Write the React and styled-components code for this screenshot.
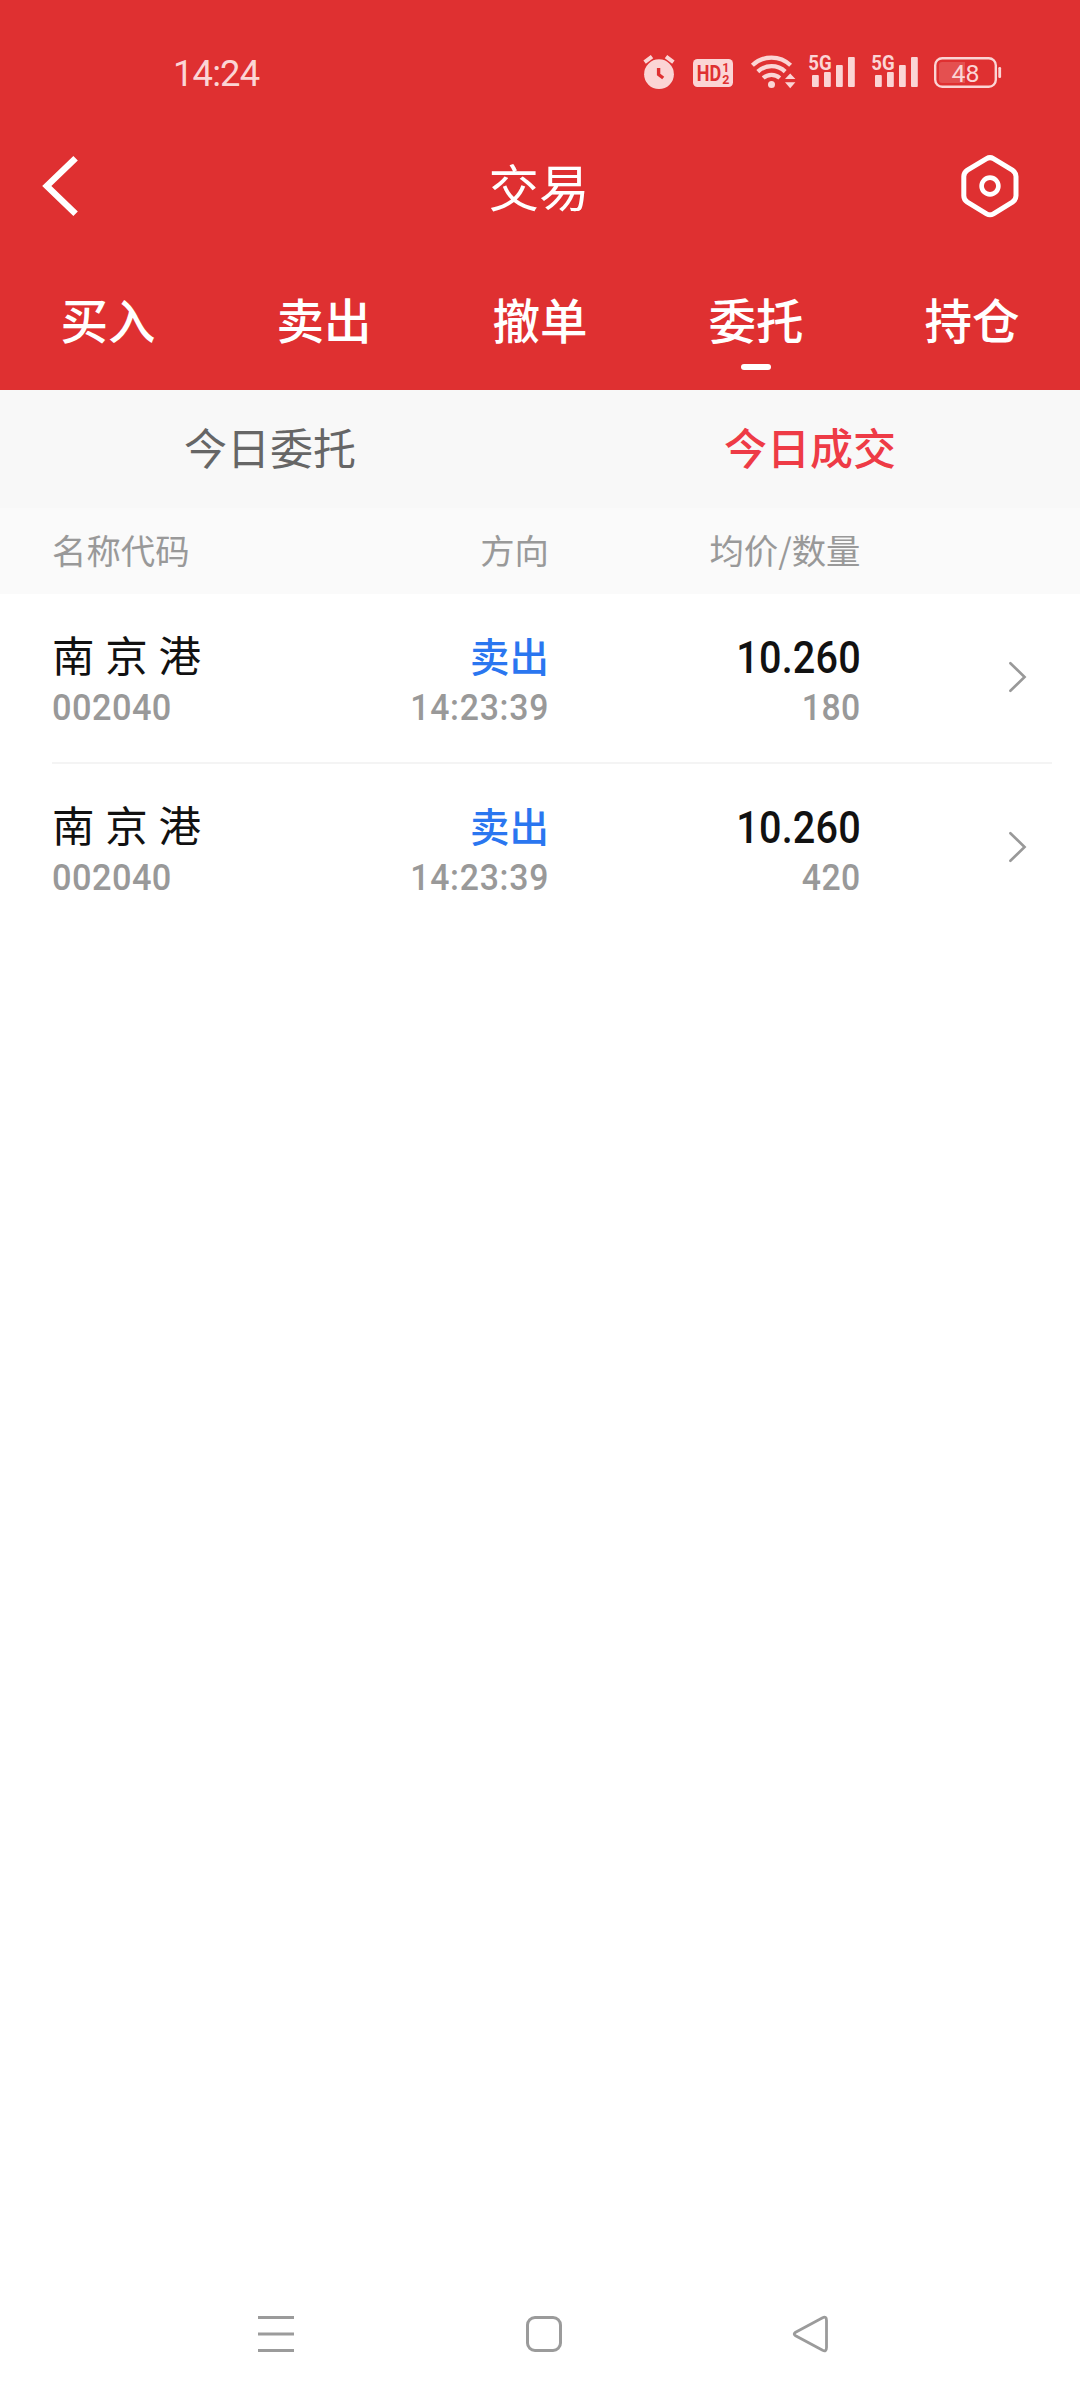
import React from "react";
import styled, { createGlobalStyle } from "styled-components";

const CJK = `"Noto Sans CJK SC", sans-serif`;
const DIGITS = `Roboto, "Noto Sans CJK SC", sans-serif`;
const PALE = "#fbd5d5";
const RED = "#df3031";

const GlobalStyle = createGlobalStyle`
  body { margin: 0; background: #fff; }
  * { box-sizing: border-box; }
  svg { display: block; flex: none; }
`;

const Screen = styled.div`
  width: 1080px;
  height: 2400px;
  display: flex;
  flex-direction: column;
  background: #fff;
  font-family: ${CJK};
`;

const Header = styled.header`
  height: 390px;
  display: flex;
  flex-direction: column;
  background: ${RED};
  color: #fff;
`;

const StatusBar = styled.div`
  height: 124px;
  padding: 51px 78px 0 173px;
  display: flex;
  justify-content: space-between;
  align-items: flex-start;
  color: ${PALE};
`;

const Clock = styled.span`
  font: 400 37.5px/44px ${DIGITS};
  letter-spacing: -0.9px;
  transform: scaleX(0.97);
  transform-origin: left;
`;

const StatusIcons = styled.div`
  display: flex;
  padding-top: 1px;
`;

const IconSlot = styled.div`
  margin-left: ${(p) => p.$gap || 0}px;
`;

const TitleBar = styled.div`
  height: 124px;
  padding: 0 60px 0 40px;
  display: grid;
  grid-template-columns: 60px 1fr 60px;
  align-items: center;
`;

const Title = styled.h1`
  margin: 0;
  padding: 0 0 2px 18px;
  font: 400 50.5px/60px ${CJK};
  text-align: center;
`;

const IconButton = styled.button`
  display: flex;
  justify-content: ${(p) => (p.$end ? "flex-end" : "flex-start")};
  padding: 0;
  border: 0;
  background: none;
`;

const Tabs = styled.nav`
  flex: 1;
  display: grid;
  grid-template-columns: repeat(5, 1fr);
`;

const Tab = styled.div`
  display: flex;
  flex-direction: column;
  align-items: center;
  padding-top: 41px;
  font: 500 47.5px/60px ${CJK};
  &::after {
    content: "";
    width: 30px;
    height: 6px;
    margin-top: 15px;
    border-radius: 3px;
    background: ${(p) => (p.$active ? "#fff" : "transparent")};
  }
`;

const SubTabs = styled.div`
  height: 118px;
  display: grid;
  grid-template-columns: 1fr 1fr;
  background: #f8f8f8;
`;

const SubTab = styled.div`
  padding-top: 26px;
  text-align: center;
  font: ${(p) => (p.$active ? 500 : 400)} 43px/60px ${CJK};
  color: ${(p) => (p.$active ? "#ee3b46" : "#666")};
`;

const columns = `
  display: grid;
  grid-template-columns: 248px 249px 311.5px 1fr;
`;

const ColumnHeads = styled.div`
  ${columns}
  height: 86px;
  padding: 0 52px 5px;
  align-items: center;
  background: #fafafa;
  color: #999;
  font: 400 34.4px/50px ${CJK};
`;

const Head = styled.span`
  text-align: ${(p) => (p.$right ? "right" : "left")};
`;

const List = styled.div`
  flex: 1;
`;

const Row = styled.div`
  ${columns}
  height: 170px;
  margin: 0 28px 0 52px;
  padding-top: 32px;
  border-bottom: 2px solid ${(p) => (p.$last ? "transparent" : "#f4f4f4")};
`;

const Cell = styled.div`
  display: flex;
  flex-direction: column;
  align-items: ${(p) => (p.$right ? "flex-end" : "flex-start")};
`;

const Name = styled.span`
  height: 60px;
  font: 400 42.5px/56px ${CJK};
  color: #111;
  word-spacing: 1.2px;
  white-space: nowrap;
`;

const Side = styled.span`
  height: 60px;
  font: 500 39.5px/57px ${CJK};
  color: #2a76f0;
`;

const Price = styled.span`
  height: 60px;
  padding-top: 5px;
  font: 500 43.5px/56px ${DIGITS};
  letter-spacing: 0.2px;
  transform: scaleX(0.91);
  transform-origin: right;
  color: #111;
`;

const Minor = styled.span`
  font: 500 36.5px/44px ${DIGITS};
  letter-spacing: ${(p) => p.$track || 0.5}px;
  transform: scaleX(${(p) => (p.$right ? 0.925 : 0.94)});
  transform-origin: ${(p) => (p.$right ? "right" : "left")};
  color: #999;
`;

const RowArrow = styled.div`
  display: flex;
  justify-content: flex-end;
  padding: 34.5px 24px 0 0;
`;

const SystemNav = styled.footer`
  height: 132px;
  padding: 0 250px 0 257px;
  display: flex;
  justify-content: space-between;
  align-items: center;
`;

const AlarmIcon = () => (
  <svg width="34" height="40" viewBox="642 52 34 40">
    <circle cx="659" cy="74.2" r="14.9" fill={PALE} />
    <path d="M644.6 62.2 652 56.6M673.4 62.2 666 56.6" stroke={PALE} strokeWidth="4" />
    <path d="M658.6 68V74.5L663.2 78" fill="none" stroke={RED} strokeWidth="3.4" />
  </svg>
);

const HdIcon = () => (
  <svg width="40" height="40" viewBox="693 52 40 40">
    <rect x="693" y="59" width="40" height="28" rx="4.5" fill={PALE} />
    <g fill={RED} fontFamily="Roboto, sans-serif" fontWeight="700">
      <text x="696.8" y="81" fontSize="22.5" textLength="24.4" lengthAdjust="spacingAndGlyphs">HD</text>
      <text x="722.2" y="72" fontSize="12.5">1</text>
      <text x="722.2" y="83.6" fontSize="12.5">2</text>
    </g>
  </svg>
);

const WifiIcon = () => (
  <svg width="46" height="40" viewBox="750 52 46 40">
    <g fill="none" stroke={PALE} strokeWidth="4.2">
      <path d="M752.4 65.3A27.4 27.4 0 0 1 790.6 65.3" />
      <path d="M757.8 71.6A20 20 0 0 1 785.2 71.6" />
      <path d="M763.2 78A12.5 12.5 0 0 1 779.8 78" />
    </g>
    <circle cx="771.5" cy="84.5" r="3.5" fill={PALE} />
    <path d="M785 79 790.2 73.5 795.4 79ZM785 82.2H795.4L790.2 88.2Z" fill={PALE} />
  </svg>
);

const SignalIcon = () => (
  <svg width="47" height="40" viewBox="808 52 47 40">
    <text x="808.2" y="70.2" fontFamily="Roboto, sans-serif" fontWeight="700" fontSize="21" textLength="23.4" lengthAdjust="spacingAndGlyphs" fill={PALE}>5G</text>
    <g fill={PALE}>
      <rect x="812" y="75" width="6.8" height="12" rx="1" />
      <rect x="824" y="72" width="6.8" height="15" rx="1" />
      <rect x="836" y="65" width="6.8" height="22" rx="1" />
      <rect x="848" y="57" width="6.8" height="30" rx="1" />
    </g>
  </svg>
);

const BatteryIcon = () => (
  <svg width="68" height="40" viewBox="934 52 68 40">
    <rect x="935.2" y="58.2" width="60.6" height="28.6" rx="7" fill="none" stroke={PALE} strokeWidth="2.4" />
    <path d="M942 62H965V83H942Q939 83 939 80V65Q939 62 942 62Z" fill="#e45050" />
    <rect x="998.3" y="67" width="2.8" height="11" rx="1.2" fill={PALE} />
    <text x="951.6" y="81.8" fontFamily="Roboto, sans-serif" fontSize="24.5" textLength="28" lengthAdjust="spacingAndGlyphs" fill={PALE}>48</text>
  </svg>
);

const BackIcon = () => (
  <svg width="40" height="64" viewBox="40 154 40 64">
    <path d="M75.6 158.2 46.8 186 75.6 213.8" fill="none" stroke="#fff" strokeWidth="6.4" />
  </svg>
);

const SettingsIcon = () => (
  <svg width="60" height="64" viewBox="960 154 60 64">
    <path
      d="M986.6 158.6Q990 156.6 993.4 158.6L1012.4 170.2Q1016 172.6 1016 176.6V195.8Q1016 199.8 1012.4 202.2L993.4 213.8Q990 215.8 986.6 213.8L967.4 202.2Q963.8 199.8 963.8 195.8V176.6Q963.8 172.6 967.4 170.2Z"
      fill="none"
      stroke="#fff"
      strokeWidth="5"
      strokeLinejoin="round"
    />
    <circle cx="990" cy="186" r="8.4" fill="none" stroke="#fff" strokeWidth="4.6" />
  </svg>
);

const ChevronIcon = () => (
  <svg width="20" height="32" viewBox="0 0 20 32">
    <path d="M2.4 2.2 16.6 16 2.4 29.8" fill="none" stroke="#999" strokeWidth="2.6" strokeLinecap="round" />
  </svg>
);

const MenuIcon = () => (
  <svg width="38" height="38" viewBox="0 0 38 38">
    <path d="M1 2.5H37M1 19H37M1 35.5H37" stroke="#9b9b9b" strokeWidth="3" />
  </svg>
);

const HomeIcon = () => (
  <svg width="38" height="38" viewBox="0 0 38 38">
    <rect x="2.5" y="2.5" width="33" height="33" rx="7.5" fill="none" stroke="#9b9b9b" strokeWidth="3" />
  </svg>
);

const ReturnIcon = () => (
  <svg width="38" height="38" viewBox="0 0 38 38">
    <path
      d="M3.6 17.2 30.6 2.7Q34.5 1 34.5 5.4V32.6Q34.5 37 30.6 35.3L3.6 20.8Q0.8 19 3.6 17.2Z"
      fill="none"
      stroke="#9b9b9b"
      strokeWidth="2.8"
    />
  </svg>
);

const tabs = ["买入", "卖出", "撤单", "委托", "持仓"];
const trades = [
  { name: "南 京 港", code: "002040", side: "卖出", time: "14:23:39", price: "10.260", qty: "180" },
  { name: "南 京 港", code: "002040", side: "卖出", time: "14:23:39", price: "10.260", qty: "420" },
];

export default function App() {
  return (
    <Screen>
      <GlobalStyle />
      <Header>
        <StatusBar>
          <Clock>14:24</Clock>
          <StatusIcons>
            <IconSlot><AlarmIcon /></IconSlot>
            <IconSlot $gap={17}><HdIcon /></IconSlot>
            <IconSlot $gap={17}><WifiIcon /></IconSlot>
            <IconSlot $gap={12}><SignalIcon /></IconSlot>
            <IconSlot $gap={16}><SignalIcon /></IconSlot>
            <IconSlot $gap={16}><BatteryIcon /></IconSlot>
          </StatusIcons>
        </StatusBar>
        <TitleBar>
          <IconButton aria-label="返回"><BackIcon /></IconButton>
          <Title>交易</Title>
          <IconButton $end aria-label="设置"><SettingsIcon /></IconButton>
        </TitleBar>
        <Tabs>
          {tabs.map((t) => (
            <Tab key={t} $active={t === "委托"}>{t}</Tab>
          ))}
        </Tabs>
      </Header>
      <SubTabs>
        <SubTab>今日委托</SubTab>
        <SubTab $active>今日成交</SubTab>
      </SubTabs>
      <ColumnHeads>
        <Head>名称代码</Head>
        <Head $right>方向</Head>
        <Head $right>均价/数量</Head>
      </ColumnHeads>
      <List>
        {trades.map((t, i) => (
          <Row key={i} $last={i === trades.length - 1}>
            <Cell>
              <Name>{t.name}</Name>
              <Minor>{t.code}</Minor>
            </Cell>
            <Cell $right>
              <Side>{t.side}</Side>
              <Minor $right $track={0.8}>{t.time}</Minor>
            </Cell>
            <Cell $right>
              <Price>{t.price}</Price>
              <Minor $right>{t.qty}</Minor>
            </Cell>
            <RowArrow><ChevronIcon /></RowArrow>
          </Row>
        ))}
      </List>
      <SystemNav>
        <MenuIcon />
        <HomeIcon />
        <ReturnIcon />
      </SystemNav>
    </Screen>
  );
}
